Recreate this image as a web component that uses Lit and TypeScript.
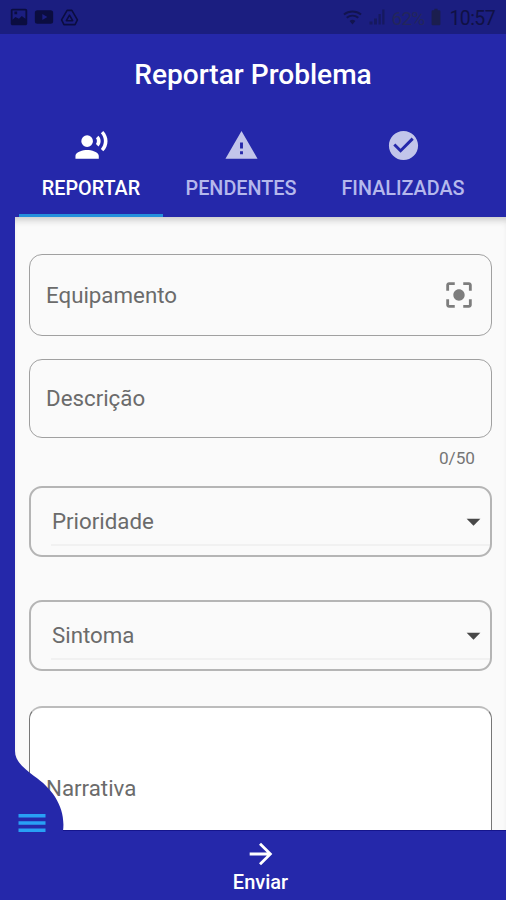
import { LitElement, html, css, svg } from "lit";
import { customElement, property } from "lit/decorators.js";

const paths: Record<string, string> = {
  voice:
    "M9 5a4 4 0 1 0 0 8 4 4 0 0 0 0-8zM9 15c-2.67 0-8 1.34-8 4v2h16v-2c0-2.66-5.33-4-8-4zm7.76-9.64l-1.68 1.69c.84 1.18.84 2.71 0 3.89l1.68 1.69c2.02-2.02 2.02-5.07 0-7.27zM20.07 2l-1.63 1.63c2.77 3.02 2.77 7.56 0 10.74L20.07 16c3.9-3.89 3.91-9.95 0-14z",
  warning: "M1 21h22L12 2 1 21zm12-3h-2v-2h2v2zm0-4h-2v-4h2v4z",
  check:
    "M12 2C6.48 2 2 6.48 2 12s4.48 10 10 10 10-4.48 10-10S17.52 2 12 2zm-2 15l-5-5 1.41-1.41L10 14.17l7.59-7.59L19 8l-9 9z",
  focus:
    "M12 8c-2.21 0-4 1.79-4 4s1.79 4 4 4 4-1.79 4-4-1.79-4-4-4zm-7 7H3v4c0 1.1.9 2 2 2h4v-2H5v-4zM5 5h4V3H5c-1.1 0-2 .9-2 2v4h2V5zm14-2h-4v2h4v4h2V5c0-1.1-.9-2-2-2zm0 16h-4v2h4c1.1 0 2-.9 2-2v-4h-2v4z",
  drop: "M7 10l5 5 5-5z",
  arrow: "M12 4l-1.41 1.41L16.17 11H4v2h12.17l-5.58 5.59L12 20l8-8z",
  menu: "M3 18h18v-2.3H3v2.3zm0-4.85h18v-2.3H3v2.3zM3 6v2.3h18V6H3z",
  image:
    "M21 19V5c0-1.100-.9-2-2-2H5c-1.100 0-2 .9-2 2v14c0 1.100.9 2 2 2h14c1.100 0 2-.9 2-2zM5 15V5h14v9l-4-3-3 3-4-2-3 3zM7 6h3v3H7z",
  video:
    "M4 4h16a3 3 0 0 1 3 3v10a3 3 0 0 1-3 3H4a3 3 0 0 1-3-3V7a3 3 0 0 1 3-3zm6 4.500v7l6-3.500z",
  wifi:
    "M12 21l3.500-4.300a5.500 5.500 0 0 0-7 0zM1 8l1.500 1.900a15 15 0 0 1 19 0L23 8a17.500 17.500 0 0 0-22 0zm3.300 4l1.500 1.900a10 10 0 0 1 12.400 0l1.500-1.900a12.500 12.500 0 0 0-15.400 0z",
  signal: "M2 22v-4h4v4zM8 22v-8h4v8zM14 22V8h3v14zM19 22V2h3v20z",
  battery: "M16 4h-2V2h-4v2H8a1.300 1.300 0 0 0-1.300 1.300v15.400A1.300 1.300 0 0 0 8 22h8a1.300 1.300 0 0 0 1.300-1.300V5.300A1.300 1.300 0 0 0 16 4z",
};

@customElement("ui-icon")
class UiIcon extends LitElement {
  @property() name = "";
  static styles = css`
    :host { display: block; flex: none; width: 35px; height: 35px; }
    svg { display: block; width: 100%; height: 100%; fill: currentColor; }
    .line { fill: none; stroke: currentColor; stroke-width: 2; stroke-linejoin: round; }
  `;
  render() {
    return html`<svg viewBox="0 0 24 24">
      ${this.name === "drive"
        ? svg`<path class="line" d="M9 3h6l7 12-3 6H5l-3-6z"/><path class="line" d="M12 9l4 7H8z"/>`
        : svg`<path fill-rule="evenodd" d=${paths[this.name] ?? ""} />`}
    </svg>`;
  }
}

@customElement("app-root")
class AppRoot extends LitElement {
  static styles = css`
    :host {
      display: flex; flex-direction: column; position: relative;
      width: 506px; height: 900px; overflow: hidden;
      background: #2528aa; color: #fff;
      font-family: Roboto, "Liberation Sans", sans-serif;
    }
    * { box-sizing: border-box; }
    .status {
      flex: none; display: flex; align-items: center; height: 34px;
      padding: 0 11px 0 8px; background: #1b1e80; color: #0b0d40;
    }
    .status .image { width: 22px; height: 22px; margin-right: 3px; }
    .status .video { width: 22px; height: 20px; margin-right: 5px; }
    .status .drive { width: 19px; height: 19px; margin-right: auto; }
    .status .wifi { width: 21px; height: 20px; margin-right: 5px; color: #12144f; }
    .status .signal { width: 18px; height: 18px; color: #16195f; }
    .level { margin: 2px 2px 0 6px; font-size: 19px; letter-spacing: -0.8px; color: #23265c; }
    .status .battery { width: 20px; height: 20px; color: #1b1e4e; }
    .clock { margin: 2px 0 0 3px; font-size: 19.500px; letter-spacing: -0.6px; color: #101145; }
    .title {
      flex: none; height: 82px; margin: 0; text-align: center;
      font-size: 28.100px; font-weight: 500; line-height: 81px;
    }
    .tabs { flex: none; display: flex; height: 101px; padding-left: 19px; }
    .tab {
      display: flex; flex-direction: column; align-items: center;
      width: 144px; padding-top: 12px; color: #b5b8ec;
      font-size: 19.800px; font-weight: 500; line-height: 24px;
      border-bottom: 3px solid transparent;
    }
    .tab span { margin-top: 14px; }
    .tab ui-icon { color: #c2c5ea; }
    .tab.active, .tab.active ui-icon { color: #fff; }
    .tab.active { border-color: #2490dc; }
    .tab:nth-child(2) { width: 156px; }
    .tab:nth-child(3) { width: 168px; }
    .form {
      flex: 1; min-height: 0; overflow: hidden; margin-left: 15px;
      padding: 37px 14px 0; background: #fafafa; color: #6b6b6b;
      box-shadow: inset 0 7px 7px -4px #c8c8c8;
      font-size: 22.300px; line-height: 26px;
    }
    .field {
      display: flex; align-items: center; justify-content: space-between;
      border: 1.500px solid #a0a0a0; border-radius: 13px; padding: 0 15px 0 16px;
    }
    .equipment { height: 82px; }
    .equipment span { padding-bottom: 1px; }
    .description span, .select span { padding-bottom: 2px; }
    .equipment ui-icon { width: 34px; height: 34px; color: #7d7d7d; }
    .description { height: 79px; margin-top: 23px; }
    .count { height: 48px; padding: 8px 17px 0 0; text-align: right; font-size: 17.200px; line-height: 24px; color: #757575; }
    .select {
      height: 71px; padding: 0 0 0 21px;
      border: 2px solid #b5b5b5;
      background: linear-gradient(#f1f1f1, #f1f1f1) 20px 56px / 100% 2px no-repeat;
    }
    .select ui-icon { width: 33px; height: 33px; color: #484848; }
    .symptom { margin-top: 43px; }
    .narrative {
      height: 163px; margin-top: 35px; background: #fff;
      border-color: #777; border-top: 2px solid #bcbcbc;
    }
    .footer {
      flex: none; display: flex; flex-direction: column; align-items: center;
      height: 70px; padding: 6px 0 0 15px; border-top: 1px solid #15158c;
      font-size: 20px; font-weight: 500; line-height: 22px;
    }
    .footer ui-icon { width: 34px; height: 34px; }
    .drawer { position: absolute; left: 0; bottom: 69px; width: 66px; height: 86px; }
    .drawer svg { display: block; width: 66px; height: 86px; fill: #2528aa; }
    .drawer ui-icon { position: absolute; left: 14px; bottom: -10px; width: 36px; height: 36px; color: #28a0f5; }
  `;

  render() {
    return html`
      <div class="status">
        <ui-icon class="image" name="image"></ui-icon>
        <ui-icon class="video" name="video"></ui-icon>
        <ui-icon class="drive" name="drive"></ui-icon>
        <ui-icon class="wifi" name="wifi"></ui-icon>
        <ui-icon class="signal" name="signal"></ui-icon>
        <span class="level">62%</span>
        <ui-icon class="battery" name="battery"></ui-icon>
        <span class="clock">10:57</span>
      </div>
      <h1 class="title">Reportar Problema</h1>
      <nav class="tabs">
        <div class="tab active"><ui-icon name="voice"></ui-icon><span>REPORTAR</span></div>
        <div class="tab"><ui-icon name="warning"></ui-icon><span>PENDENTES</span></div>
        <div class="tab"><ui-icon name="check"></ui-icon><span>FINALIZADAS</span></div>
      </nav>
      <main class="form">
        <div class="field equipment"><span>Equipamento</span><ui-icon name="focus"></ui-icon></div>
        <div class="field description"><span>Descrição</span></div>
        <div class="count">0/50</div>
        <div class="field select"><span>Prioridade</span><ui-icon name="drop"></ui-icon></div>
        <div class="field select symptom"><span>Sintoma</span><ui-icon name="drop"></ui-icon></div>
        <div class="field narrative"><span>Narrativa</span></div>
      </main>
      <footer class="footer"><ui-icon name="arrow"></ui-icon><span>Enviar</span></footer>
      <div class="drawer">
        <svg viewBox="0 0 66 86">
          <path d="M0 0H15V6C15 17 25 24 34 31C53 44 66 63 63 86H0z" />
        </svg>
        <ui-icon name="menu"></ui-icon>
      </div>
    `;
  }
}
